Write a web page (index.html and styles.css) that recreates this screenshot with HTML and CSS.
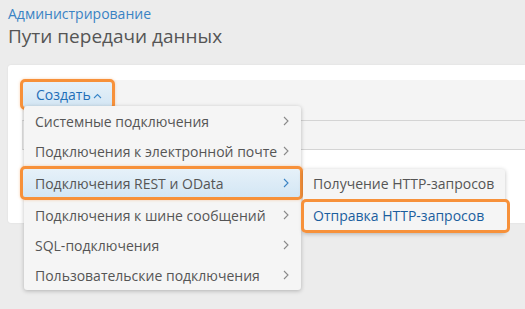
FILE: index.html
```html
<!DOCTYPE html>
<html lang="ru">
<head>
  <meta charset="UTF-8" />
  <title>Пути передачи данных</title>
  <link rel="stylesheet" href="styles.css">
</head>
<body>
  <div class="page-head">
    <a class="crumb" href="#">Администрирование</a>
    <h1>Пути передачи данных</h1>
  </div>

  <div class="panel">
    <div class="toolbar">
      <div class="create-wrap">
        <button class="create-btn">Создать<span class="caret">
          <svg width="9" height="6" viewBox="0 0 9 6"><path d="M1 5 L4.5 1.5 L8 5" fill="none" stroke="#3a86c8" stroke-width="1.1"/></svg>
        </span></button>

        <ul class="menu">
          <li>Системные подключения<svg class="chev" width="6" height="10" viewBox="0 0 6 10"><path d="M1 1 L5 5 L1 9" fill="none" stroke="currentColor" stroke-width="1.1"/></svg></li>
          <li>Подключения к электронной почте<svg class="chev" width="6" height="10" viewBox="0 0 6 10"><path d="M1 1 L5 5 L1 9" fill="none" stroke="currentColor" stroke-width="1.1"/></svg></li>
          <li class="active">Подключения REST и OData<svg class="chev" width="6" height="10" viewBox="0 0 6 10"><path d="M1 1 L5 5 L1 9" fill="none" stroke="currentColor" stroke-width="1.1"/></svg>
            <ul class="submenu">
              <li>Получение HTTP-запросов</li>
              <li class="picked">Отправка HTTP-запросов</li>
            </ul>
          </li>
          <li>Подключения к шине сообщений<svg class="chev" width="6" height="10" viewBox="0 0 6 10"><path d="M1 1 L5 5 L1 9" fill="none" stroke="currentColor" stroke-width="1.1"/></svg></li>
          <li>SQL-подключения<svg class="chev" width="6" height="10" viewBox="0 0 6 10"><path d="M1 1 L5 5 L1 9" fill="none" stroke="currentColor" stroke-width="1.1"/></svg></li>
          <li>Пользовательские подключения<svg class="chev" width="6" height="10" viewBox="0 0 6 10"><path d="M1 1 L5 5 L1 9" fill="none" stroke="currentColor" stroke-width="1.1"/></svg></li>
        </ul>
      </div>
    </div>
    <div class="grid-head"></div>
  </div>
</body>
</html>
```

FILE: styles.css
```css
html, body {
  height: 100%;
}
body {
  margin: 0;
  background: #ececec;
  font-family: "Open Sans", Arial, sans-serif;
  color: #555;
}
.page-head {
  padding: 4px 8px 0 8px;
}
.crumb {
  display: block;
  color: #3a83c4;
  font-size: 14px;
  line-height: 20px;
  text-decoration: none;
}
h1 {
  margin: 0;
  font-size: 19px;
  font-weight: normal;
  line-height: 24px;
  color: #555;
}
.panel {
  margin: 17px 0 0 8px;
  padding-top: 15px;
  height: 143px;
  background: #fff;
  border-radius: 3px 0 0 3px;
  box-shadow: 0 0 2px rgba(0,0,0,0.08);
}
.toolbar {
  margin-left: 14px;
  height: 40px;
  background: #f4f4f4;
  border-bottom: 1px solid #d4d4d4;
  position: relative;
  z-index: 2;
}
.grid-head {
  margin-left: 14px;
  height: 28px;
  background: #f4f4f4;
  border-bottom: 1px solid #d4d4d4;
  border-left: 1px solid #e0e0e0;
}
.create-wrap {
  position: absolute;
  left: -2px;
  top: -1px;
}
.create-btn {
  display: flex;
  align-items: center;
  gap: 2px;
  height: 31px;
  padding: 0 10px 0 13px;
  font-family: inherit;
  font-size: 14px;
  color: #1f6fb8;
  background: linear-gradient(#e6f1f9, #d3e6f4);
  border: 3px solid #f7913a;
  border-radius: 5px;
  box-shadow: 0 0 3px rgba(247,145,58,0.4);
}
.caret {
  display: flex;
  margin-top: 2px;
}
.menu {
  position: absolute;
  left: 4px;
  top: 27px;
  margin: 0;
  padding: 0;
  list-style: none;
  width: 277px;
  background: #f5f5f5;
  border-radius: 3px;
  box-shadow: 0 1px 4px rgba(0,0,0,0.25);
}
.menu > li {
  position: relative;
  display: flex;
  justify-content: space-between;
  align-items: center;
  height: 30px;
  padding: 0 12px 0 11px;
  font-size: 14px;
  color: #555;
  white-space: nowrap;
}
.chev {
  color: #8a8a8a;
  flex: none;
}
.menu > li.active {
  margin: 0 -2px 0 -4px;
  padding: 0 11px 0 12px;
  height: 28px;
  border: 3px solid #f7913a;
  border-radius: 5px;
  background: linear-gradient(#e6f1f9, #d3e6f4);
  box-shadow: 0 0 3px rgba(247,145,58,0.4);
}
.menu > li.active .chev {
  color: #3a83c4;
}
.submenu {
  position: absolute;
  left: 280px;
  top: 0;
  margin: 0;
  padding: 0;
  list-style: none;
  width: 202px;
  background: #f5f5f5;
  border-radius: 3px;
  box-shadow: 0 1px 4px rgba(0,0,0,0.25);
}
.submenu li {
  height: 30px;
  line-height: 30px;
  padding: 0 10px;
  font-size: 14px;
  color: #555;
}
.submenu li.picked {
  margin: 0 -5px 0 -2px;
  padding: 0 14px 0 9px;
  height: 28px;
  line-height: 28px;
  color: #1b5e9e;
  border: 3px solid #f7913a;
  border-radius: 5px;
  background: #f5f5f5;
}
```
